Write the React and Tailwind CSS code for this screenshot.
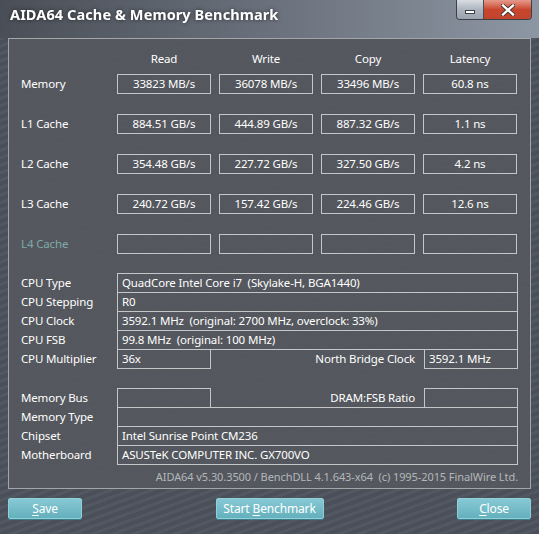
import React from 'react';

const font = { fontFamily: '"Noto Sans", "Open Sans", sans-serif' };

const results = [
  { label: 'Memory', values: ['33823 MB/s', '36078 MB/s', '33496 MB/s', '60.8 ns'] },
  { label: 'L1 Cache', values: ['884.51 GB/s', '444.89 GB/s', '887.32 GB/s', '1.1 ns'] },
  { label: 'L2 Cache', values: ['354.48 GB/s', '227.72 GB/s', '327.50 GB/s', '4.2 ns'] },
  { label: 'L3 Cache', values: ['240.72 GB/s', '157.42 GB/s', '224.46 GB/s', '12.6 ns'] },
  { label: 'L4 Cache', values: ['', '', '', ''], disabled: true },
];

const ValueBox = ({ children }) => (
  <div className="h-[20px] border border-[#c4c6c8] flex items-center justify-center text-white leading-none">
    {children}
  </div>
);

const InfoRow = ({ label, children }) => (
  <div className="flex h-[20px] -mt-px first:mt-0">
    <div className="w-[96px] shrink-0 flex items-center text-white">{label}</div>
    <div className="flex-1 border border-[#c4c6c8] flex items-center px-[4px] text-white whitespace-nowrap">
      {children}
    </div>
  </div>
);

const SplitRow = ({ label, left, midLabel, right }) => (
  <div className="flex h-[20px] -mt-px first:mt-0">
    <div className="w-[96px] shrink-0 flex items-center text-white">{label}</div>
    <div className="w-[94px] border border-[#c4c6c8] flex items-center px-[4px] text-white">{left}</div>
    <div className="flex-1 flex items-center justify-end pr-[9px] text-white">{midLabel}</div>
    <div className="w-[94px] border border-[#c4c6c8] flex items-center px-[4px] text-white">{right}</div>
  </div>
);

const Button = ({ children, width }) => (
  <button
    className={`${width} h-[21px] rounded-[2px] border border-[#8fd0da] bg-gradient-to-b from-[#86c9d4] to-[#64b0bd] text-white text-[12px] leading-none shadow-[0_1px_0_#3d7d88]`}
  >
    {children}
  </button>
);

export default function App() {
  return (
    <div
      className="w-[539px] h-[534px] overflow-hidden relative text-[11.5px] tracking-[-0.15px] bg-[#4c525c] bg-[repeating-linear-gradient(160deg,rgba(255,255,255,0.035)_0px,rgba(255,255,255,0.035)_3px,rgba(0,0,0,0.03)_3px,rgba(0,0,0,0.03)_7px)]"
      style={font}
    >
      {/* Title bar */}
      <div className="h-[38px] flex items-start justify-between bg-gradient-to-r from-[#4a4f57] via-[#6a717c] to-[#8d96a3]">
        <div className="pl-[10px] pt-[4px] text-white font-bold text-[14.5px] tracking-[0.1px] drop-shadow-[0_0_2px_rgba(0,0,0,0.6)]">
          AIDA64 Cache &amp; Memory Benchmark
        </div>
        <div className="flex mr-[7px] border border-t-0 border-[#3c4148] rounded-b-[4px] overflow-hidden">
          <div className="w-[27px] h-[19px] bg-gradient-to-b from-[#d9dde2] via-[#aeb5bf] to-[#9aa3ae] flex items-center justify-center border-r border-[#4a4f56]">
            <div className="w-[10px] h-[4px] bg-white border border-[#3c4148] mt-[4px]" />
          </div>
          <div className="w-[47px] h-[19px] bg-gradient-to-b from-[#e49a8c] via-[#c9462e] to-[#c2432c] flex items-center justify-center">
            <svg width="14" height="12" viewBox="0 0 14 12">
              <path d="M2 1.5 L12 10.5 M12 1.5 L2 10.5" stroke="#3a2a28" strokeWidth="4" strokeLinecap="square" />
              <path d="M2 1.5 L12 10.5 M12 1.5 L2 10.5" stroke="#ffffff" strokeWidth="2.4" strokeLinecap="square" />
            </svg>
          </div>
        </div>
      </div>

      {/* Main panel */}
      <div className="mx-[8px] h-[451px] border border-[#a3a6a9] bg-[#56595e]/80 pl-[12px] pr-[12px] pt-[10px] flex flex-col">
        <div className="grid grid-cols-[88px_94px_94px_94px_94px] gap-x-[8px]">
          <div />
          {['Read', 'Write', 'Copy', 'Latency'].map((h) => (
            <div key={h} className="h-[20px] flex items-center justify-center text-white">{h}</div>
          ))}
        </div>
        <div className="mt-[5px] flex flex-col gap-[20px]">
          {results.map((r) => (
            <div key={r.label} className="grid grid-cols-[88px_94px_94px_94px_94px] gap-x-[8px]">
              <div className={`h-[20px] flex items-center ${r.disabled ? 'text-[#7eaaa8]' : 'text-white'}`}>
                {r.label}
              </div>
              {r.values.map((v, i) => (
                <ValueBox key={i}>{v}</ValueBox>
              ))}
            </div>
          ))}
        </div>

        <div className="mt-[19px] flex flex-col">
          <InfoRow label="CPU Type">QuadCore Intel Core i7&nbsp; (Skylake-H, BGA1440)</InfoRow>
          <InfoRow label="CPU Stepping">R0</InfoRow>
          <InfoRow label="CPU Clock">3592.1 MHz&nbsp; (original: 2700 MHz, overclock: 33%)</InfoRow>
          <InfoRow label="CPU FSB">99.8 MHz&nbsp; (original: 100 MHz)</InfoRow>
          <SplitRow label="CPU Multiplier" left="36x" midLabel="North Bridge Clock" right="3592.1 MHz" />
        </div>

        <div className="mt-[19px] flex flex-col">
          <SplitRow label="Memory Bus" left="" midLabel="DRAM:FSB Ratio" right="" />
          <InfoRow label="Memory Type"></InfoRow>
          <InfoRow label="Chipset">Intel Sunrise Point CM236</InfoRow>
          <InfoRow label="Motherboard">ASUSTeK COMPUTER INC. GX700VO</InfoRow>
        </div>

        <div className="mt-[4px] text-right text-[11px] tracking-[-0.08px] text-[#b3b7bb] whitespace-nowrap">
          AIDA64 v5.30.3500 / BenchDLL 4.1.643-x64&nbsp; (c) 1995-2015 FinalWire Ltd.
        </div>
      </div>

      {/* Buttons */}
      <div className="mx-[8px] mt-[9px] flex items-center justify-between">
        <Button width="w-[74px]">
          <span className="underline underline-offset-2">S</span>ave
        </Button>
        <Button width="w-[108px]">
          Start <span className="underline underline-offset-2">B</span>enchmark
        </Button>
        <Button width="w-[74px]">
          <span className="underline underline-offset-2">C</span>lose
        </Button>
      </div>
    </div>
  );
}
